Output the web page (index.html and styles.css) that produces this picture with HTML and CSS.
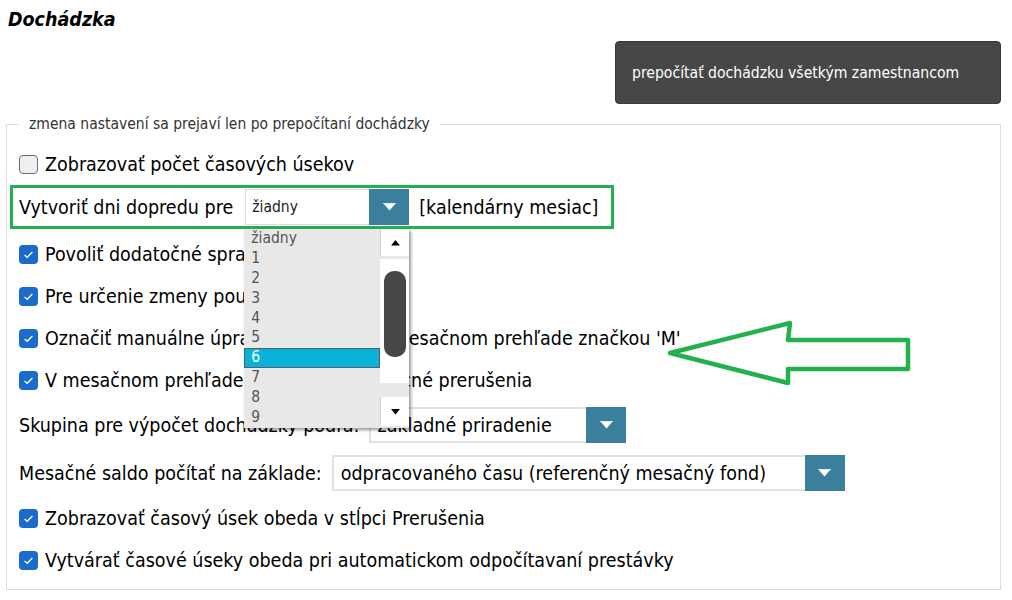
FILE: index.html
```html
<!DOCTYPE html>
<html lang="sk">
<head>
<meta charset="utf-8">
<title>Dochádzka</title>
<link rel="stylesheet" href="styles.css">
</head>
<body>
<div class="page">
  <h1 class="title">Dochádzka</h1>
  <div class="actions">
    <button class="btn-dark" type="button">prepočítať dochádzku všetkým zamestnancom</button>
  </div>
  <fieldset class="settings">
    <legend class="settings-legend">zmena nastavení sa prejaví len po prepočítaní dochádzky</legend>
    <div class="rows">
      <div class="row row-first">
        <span class="cb"></span><span class="lbl">Zobrazovať počet časových úsekov</span>
      </div>
      <div class="row row-highlight">
        <span class="lbl">Vytvoriť dni dopredu pre</span>
        <div class="select select-small">
          <span class="select-value">žiadny</span>
          <span class="select-btn"><svg width="13" height="8" viewBox="0 0 13 8"><polygon points="0,0 13,0 6.5,7.5" fill="#fff"/><polygon points="0,0 13,0 12,1.2 1,1.2" fill="#dfe8ec"/></svg></span>
          <div class="listbox">
            <ul class="list-items">
              <li>žiadny</li>
              <li>1</li>
              <li>2</li>
              <li>3</li>
              <li>4</li>
              <li>5</li>
              <li class="is-selected">6</li>
              <li>7</li>
              <li>8</li>
              <li>9</li>
            </ul>
            <div class="scrollbar">
              <span class="sb-btn sb-up"><svg width="9" height="6" viewBox="0 0 9 6"><polygon points="4.5,0 9,5.5 0,5.5" fill="#000"/></svg></span>
              <span class="sb-track"><span class="sb-thumb"></span></span>
              <span class="sb-btn sb-down"><svg width="9" height="6" viewBox="0 0 9 6"><polygon points="0,0 9,0 4.5,5.5" fill="#000"/></svg></span>
            </div>
          </div>
        </div>
        <span class="lbl">[kalendárny mesiac]</span>
      </div>
      <div class="row row-gap">
        <span class="cb cb-on"><svg width="19" height="19" viewBox="0 0 19 19"><path d="M5.6 9.9 L8.2 12.3 L13.4 7" fill="none" stroke="#fff" stroke-width="1.3"/></svg></span><span class="lbl">Povoliť dodatočné spracovanie</span>
      </div>
      <div class="row">
        <span class="cb cb-on"><svg width="19" height="19" viewBox="0 0 19 19"><path d="M5.6 9.9 L8.2 12.3 L13.4 7" fill="none" stroke="#fff" stroke-width="1.3"/></svg></span><span class="lbl">Pre určenie zmeny použiť plán</span>
      </div>
      <div class="row">
        <span class="cb cb-on"><svg width="19" height="19" viewBox="0 0 19 19"><path d="M5.6 9.9 L8.2 12.3 L13.4 7" fill="none" stroke="#fff" stroke-width="1.3"/></svg></span><span class="lbl">Označiť manuálne úpravy dochádzky v mesačnom prehľade značkou 'M'</span>
      </div>
      <div class="row">
        <span class="cb cb-on"><svg width="19" height="19" viewBox="0 0 19 19"><path d="M5.6 9.9 L8.2 12.3 L13.4 7" fill="none" stroke="#fff" stroke-width="1.3"/></svg></span><span class="lbl">V mesačnom prehľade zobrazovať pomocné prerušenia</span>
      </div>
      <div class="row row-select">
        <span class="lbl">Skupina pre výpočet dochádzky podľa:</span>
        <div class="select select-group">
          <span class="select-value">základné priradenie</span>
          <span class="select-btn"><svg width="13" height="8" viewBox="0 0 13 8"><polygon points="0,0 13,0 6.5,7.5" fill="#fff"/><polygon points="0,0 13,0 12,1.2 1,1.2" fill="#dfe8ec"/></svg></span>
        </div>
      </div>
      <div class="row row-select">
        <span class="lbl">Mesačné saldo počítať na základe:</span>
        <div class="select select-saldo">
          <span class="select-value">odpracovaného času (referenčný mesačný fond)</span>
          <span class="select-btn"><svg width="13" height="8" viewBox="0 0 13 8"><polygon points="0,0 13,0 6.5,7.5" fill="#fff"/><polygon points="0,0 13,0 12,1.2 1,1.2" fill="#dfe8ec"/></svg></span>
        </div>
      </div>
      <div class="row row-nine">
        <span class="cb cb-on"><svg width="19" height="19" viewBox="0 0 19 19"><path d="M5.6 9.9 L8.2 12.3 L13.4 7" fill="none" stroke="#fff" stroke-width="1.3"/></svg></span><span class="lbl">Zobrazovať časový úsek obeda v stĺpci Prerušenia</span>
      </div>
      <div class="row row-last">
        <span class="cb cb-on"><svg width="19" height="19" viewBox="0 0 19 19"><path d="M5.6 9.9 L8.2 12.3 L13.4 7" fill="none" stroke="#fff" stroke-width="1.3"/></svg></span><span class="lbl">Vytvárať časové úseky obeda pri automatickom odpočítavaní prestávky</span>
      </div>
    </div>
  </fieldset>
</div>
<svg class="annot-arrow" width="260" height="80" viewBox="0 0 260 80">
  <polygon points="10,38 130,8 128,25 248,25 248,54 128,54 128,68" fill="none" stroke="#22b14c" stroke-width="4.5" stroke-linejoin="round"/>
</svg>
</body>
</html>
```

FILE: styles.css
```css
* { box-sizing: border-box; }

html, body {
  margin: 0;
  padding: 0;
  background: #fff;
}

body {
  position: relative;
  width: 1012px;
  height: 600px;
  overflow: hidden;
  font-family: "DejaVu Sans Condensed", "Liberation Sans", sans-serif;
  color: #000;
}

.title {
  margin: 0;
  padding: 8px 0 0 8px;
  font-size: 19.5px;
  line-height: 24px;
  font-weight: bold;
  font-style: italic;
}

.actions {
  display: flex;
  justify-content: flex-end;
  margin-top: 9px;
  padding-right: 11px;
}

.btn-dark {
  width: 386px;
  height: 63px;
  padding: 0 0 0 16px;
  background: #474747;
  color: #fff;
  border: 1px solid #3a3a3a;
  border-radius: 4px;
  font-family: inherit;
  font-size: 15.6px;
  text-align: left;
}

.settings {
  margin: 10px 11px 0 6px;
  padding: 0 12px 9px 12px;
  border: 1px solid #dcdcdc;
  min-width: 0;
}

.settings-legend {
  padding: 0 10px;
  font-size: 15.5px;
  line-height: 20px;
  color: #333;
}

.rows {
  display: flex;
  flex-direction: column;
  align-items: flex-start;
}

.row {
  display: flex;
  align-items: center;
  height: 42px;
  font-size: 19.5px;
  white-space: nowrap;
}

.row-first { margin-top: 10px; height: 40px; }
.row-gap { margin-top: 4px; }
.row-select { height: 48px; gap: 10px; }
.row-nine { height: 43px; }
.row-last { height: 40px; }

.row-highlight {
  margin: 1px 0 0 -9px;
  height: 44px;
  padding: 0 13px 0 6px;
  border: 3px solid #22b14c;
  gap: 10px;
}

.cb {
  display: block;
  flex: none;
  width: 19px;
  height: 19px;
  margin-right: 7px;
  border: 1px solid #6e6e6e;
  border-radius: 4px;
  background: #efefef;
}

.cb-on {
  border: none;
  background: #1a6bcb;
}

.cb svg { display: block; }

.select {
  position: relative;
  display: flex;
  height: 36px;
  flex: none;
}

.select-value {
  flex: 1;
  display: flex;
  align-items: center;
  background: #fff;
  border: 2px solid #e2e2e2;
  border-right: none;
  overflow: hidden;
}

.select-btn {
  width: 40px;
  flex: none;
  display: flex;
  align-items: center;
  justify-content: center;
  background: #3a7f9c;
}

.select-btn svg { display: block; }

.select-small {
  width: 164px;
  margin-left: 2px;
}

.select-small .select-value {
  padding-left: 6px;
  font-size: 15.5px;
  color: #222;
  border-width: 1px;
  border-color: #dcdcdc;
}

.select-group { width: 257px; }
.select-group .select-value { padding-left: 6px; }

.select-saldo { width: 513px; }
.select-saldo .select-value { padding-left: 7px; }

.listbox {
  position: absolute;
  left: -1px;
  top: calc(100% + 4px);
  z-index: 5;
  display: flex;
  width: 165px;
  height: 199px;
  background: #e8e8e8;
  box-shadow: 2px 2px 3px rgba(0, 0, 0, 0.4);
  overflow: hidden;
}

.list-items {
  list-style: none;
  margin: 0;
  padding: 0;
  width: 136px;
  flex: none;
}

.list-items li {
  height: 19.9px;
  line-height: 19.9px;
  padding-left: 7px;
  font-size: 15.5px;
  color: #555;
}

.list-items li.is-selected {
  background: #0ab2d8;
  color: #fff;
  box-shadow: inset 0 0 0 1px #4e6269;
}

.scrollbar {
  width: 29px;
  flex: none;
  display: flex;
  flex-direction: column;
}

.sb-btn {
  display: flex;
  align-items: center;
  justify-content: center;
  height: 27px;
  background: #fff;
  border-left: 1px solid #d0d0d0;
}

.sb-btn svg { display: block; }

.sb-up { margin-bottom: 3px; }

.sb-track {
  display: block;
  height: 124px;
  padding: 12px 3px 0 4px;
  background: #fff;
}

.sb-thumb {
  display: block;
  height: 86px;
  border-radius: 10px;
  background: #474747;
}

.sb-down {
  margin-top: 14px;
  height: 29px;
}

.annot-arrow {
  position: absolute;
  left: 660px;
  top: 315px;
  overflow: visible;
}
```
